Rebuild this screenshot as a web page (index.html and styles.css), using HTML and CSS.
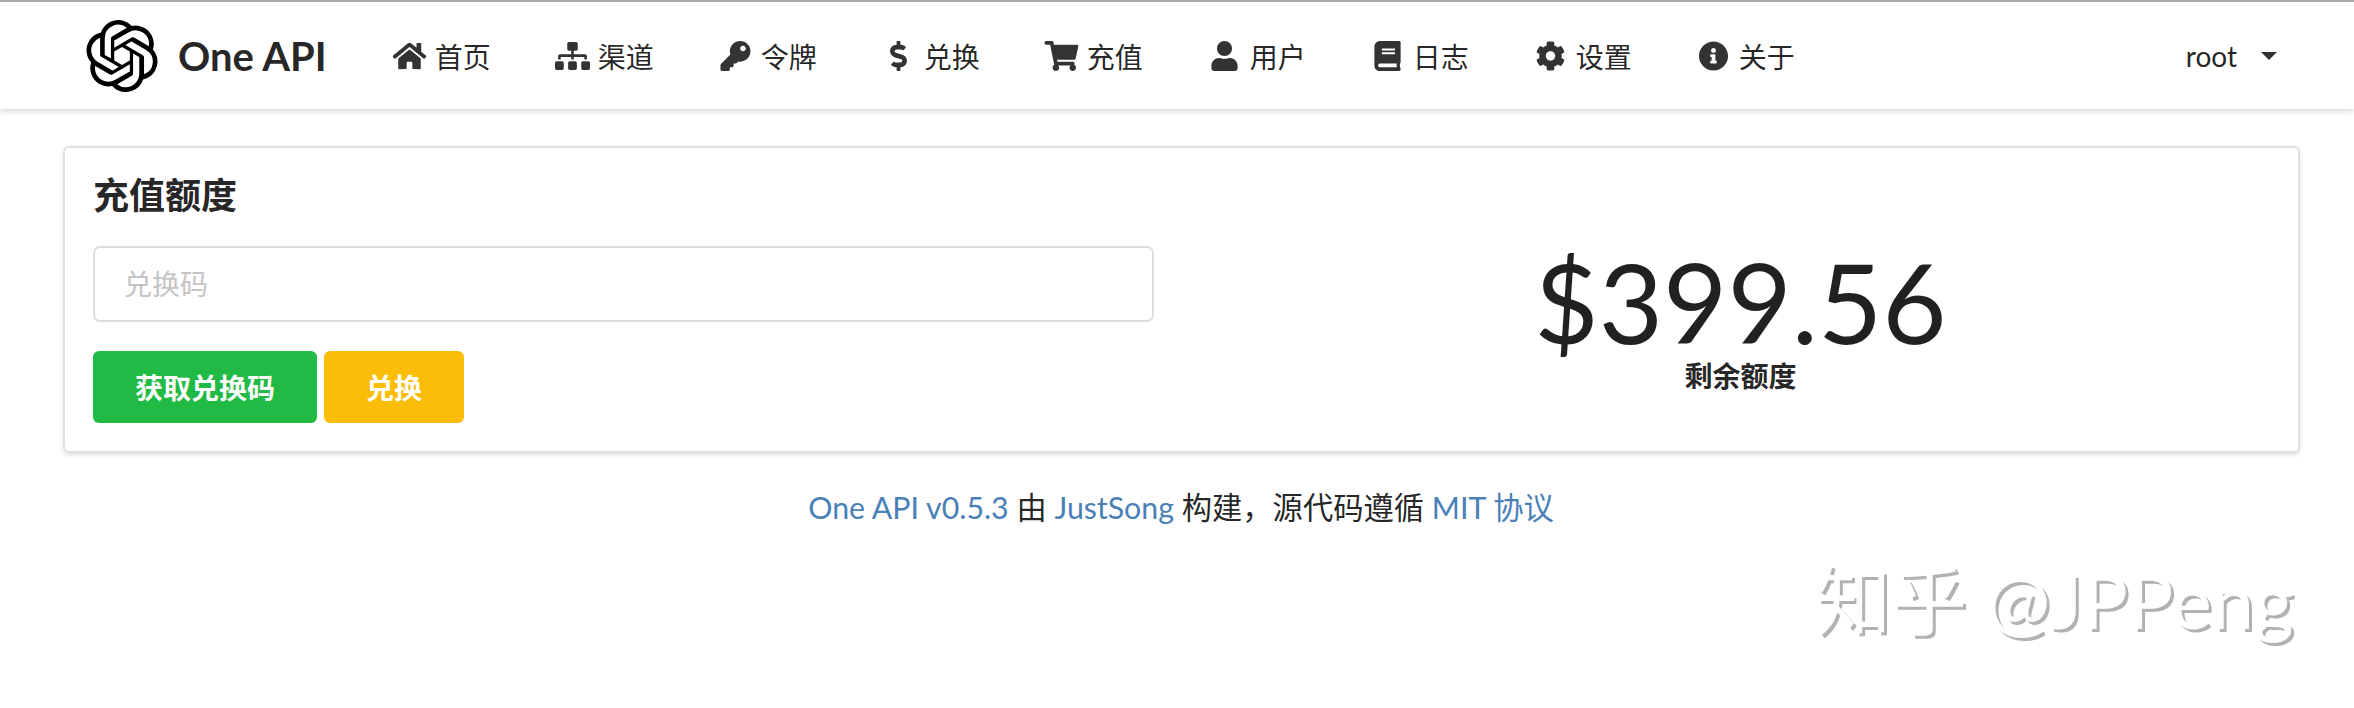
FILE: index.html
```html
<!DOCTYPE html>
<html lang="en">
<head>
    <meta charset="UTF-8">
    <meta name="viewport" content="width=device-width, initial-scale=1.0">
    <title>One API</title>
    <link rel="stylesheet" href="styles.css">
</head>
<body>
    <!-- Header -->
    <div class="header">
        <a class="brand" href="#">
            <svg class="logo" viewBox="0 0 24 24"><path d="M22.2819 9.8211a5.9847 5.9847 0 0 0-.5157-4.9108 6.0462 6.0462 0 0 0-6.5098-2.9A6.0651 6.0651 0 0 0 4.9807 4.1818a5.9847 5.9847 0 0 0-3.9977 2.9 6.0462 6.0462 0 0 0 .7427 7.0966 5.98 5.98 0 0 0 .511 4.9107 6.051 6.051 0 0 0 6.5146 2.9001A5.9847 5.9847 0 0 0 13.2599 24a6.0557 6.0557 0 0 0 5.7718-4.2058 5.9894 5.9894 0 0 0 3.9977-2.9001 6.0557 6.0557 0 0 0-.7475-7.0729zm-9.022 12.6081a4.4755 4.4755 0 0 1-2.8764-1.0408l.1419-.0804 4.7783-2.7582a.7948.7948 0 0 0 .3927-.6813v-6.7369l2.02 1.1686a.071.071 0 0 1 .038.052v5.5826a4.504 4.504 0 0 1-4.4945 4.4944zm-9.6607-4.1254a4.4708 4.4708 0 0 1-.5346-3.0137l.142.0852 4.783 2.7582a.7712.7712 0 0 0 .7806 0l5.8428-3.3685v2.3324a.0804.0804 0 0 1-.0332.0615L9.74 19.9502a4.4992 4.4992 0 0 1-6.1408-1.6464zM2.3408 7.8956a4.485 4.485 0 0 1 2.3655-1.9728V11.6a.7664.7664 0 0 0 .3879.6765l5.8144 3.3543-2.0201 1.1685a.0757.0757 0 0 1-.071 0l-4.8303-2.7865A4.504 4.504 0 0 1 2.3408 7.872zm16.5963 3.8558L13.1038 8.364 15.1192 7.2a.0757.0757 0 0 1 .071 0l4.8303 2.7913a4.4944 4.4944 0 0 1-.6765 8.1042v-5.6772a.79.79 0 0 0-.407-.667zm2.0107-3.0231l-.142-.0852-4.7735-2.7818a.7759.7759 0 0 0-.7854 0L9.409 9.2297V6.8974a.0662.0662 0 0 1 .0284-.0615l4.8303-2.7866a4.4992 4.4992 0 0 1 6.6802 4.66zM8.3065 12.863l-2.02-1.1638a.0804.0804 0 0 1-.038-.0567V6.0742a4.4992 4.4992 0 0 1 7.3757-3.4537l-.142.0805L8.704 5.459a.7948.7948 0 0 0-.3927.6813zm1.0976-2.3654l2.602-1.4998 2.6069 1.4998v2.9994l-2.5974 1.4997-2.6067-1.4997Z"/></svg>
            <span>One API</span>
        </a>
        <nav class="menu">
            <a href="#"><svg class="icon" viewBox="0 0 576 512"><path d="M280.37 148.26L96 300.11V464a16 16 0 0 0 16 16l112.06-.29a16 16 0 0 0 15.92-16V368a16 16 0 0 1 16-16h64a16 16 0 0 1 16 16v95.64a16 16 0 0 0 16 16.05L464 480a16 16 0 0 0 16-16V300L295.67 148.26a12.19 12.19 0 0 0-15.3 0zM571.6 251.47L488 182.56V44.05a12 12 0 0 0-12-12h-56a12 12 0 0 0-12 12v72.61L318.47 43a48 48 0 0 0-61 0L4.34 251.47a12 12 0 0 0-1.6 16.9l25.5 31A12 12 0 0 0 45.15 301l235.22-193.74a12.19 12.19 0 0 1 15.3 0L530.9 301a12 12 0 0 0 16.9-1.6l25.5-31a12 12 0 0 0-1.7-16.93z"/></svg>首页</a>
            <a href="#"><svg class="icon" viewBox="0 0 640 512"><path d="M128 352H32c-17.67 0-32 14.33-32 32v96c0 17.67 14.33 32 32 32h96c17.67 0 32-14.33 32-32v-96c0-17.67-14.33-32-32-32zm-24-80h192v48h48v-48h192v48h48v-57.59c0-21.17-17.23-38.41-38.41-38.41H344v-64h40c17.67 0 32-14.33 32-32V32c0-17.67-14.33-32-32-32H256c-17.67 0-32 14.33-32 32v96c0 17.67 14.33 32 32 32h40v64H94.41C73.23 224 56 241.23 56 262.41V320h48v-48zm264 80h-96c-17.67 0-32 14.33-32 32v96c0 17.67 14.33 32 32 32h96c17.67 0 32-14.33 32-32v-96c0-17.67-14.33-32-32-32zm240 0h-96c-17.67 0-32 14.33-32 32v96c0 17.67 14.33 32 32 32h96c17.67 0 32-14.33 32-32v-96c0-17.67-14.33-32-32-32z"/></svg>渠道</a>
            <a href="#"><svg class="icon" viewBox="0 0 512 512"><path d="M512 176.001C512 273.203 433.202 352 336 352c-11.22 0-22.19-1.062-32.827-3.069l-24.012 27.014A23.999 23.999 0 0 1 261.223 384H224v40c0 13.255-10.745 24-24 24h-40v40c0 13.255-10.745 24-24 24H24c-13.255 0-24-10.745-24-24v-78.059c0-6.365 2.529-12.47 7.029-16.971l161.802-161.802C163.108 213.814 160 195.271 160 176 160 78.798 238.797.001 335.999 0 433.488-.001 512 78.511 512 176.001zM336 128c0 26.51 21.49 48 48 48s48-21.49 48-48-21.49-48-48-48-48 21.49-48 48z"/></svg>令牌</a>
            <a href="#"><svg class="icon" viewBox="0 0 288 512"><path d="M209.2 233.4l-108-31.6C88.7 198.2 80 186.5 80 173.5c0-16.3 13.2-29.5 29.5-29.5h66.3c12.2 0 24.2 3.7 34.2 10.5 6.1 4.1 14.3 3.1 19.5-2l34.8-34c7.1-6.9 6.1-18.4-1.8-24.5C238 74.8 207.4 64.1 176 64V16c0-8.8-7.2-16-16-16h-32c-8.8 0-16 7.2-16 16v48h-2.5C45.8 64-5.4 118.7.5 183.6c4.2 46.1 39.4 83.6 83.8 96.6l102.5 30c12.5 3.7 21.2 15.3 21.2 28.3 0 16.3-13.2 29.5-29.5 29.5h-66.3C100 368 88 364.3 78 357.5c-6.1-4.1-14.3-3.1-19.5 2l-34.8 34c-7.1 6.9-6.1 18.4 1.8 24.5 24.5 19.2 55.1 29.9 86.5 30v48c0 8.8 7.2 16 16 16h32c8.8 0 16-7.2 16-16v-48.2c46.6-.9 90.3-28.6 105.7-72.7 21.5-61.6-14.6-124.8-72.5-141.7z"/></svg>兑换</a>
            <a href="#"><svg class="icon" viewBox="0 0 576 512"><path d="M528.12 301.319l47.273-208C578.806 78.301 567.391 64 551.99 64H159.208l-9.166-44.81C147.758 8.021 137.93 0 126.529 0H24C10.745 0 0 10.745 0 24v16c0 13.255 10.745 24 24 24h69.883l70.248 343.435C147.325 417.1 136 435.222 136 456c0 30.928 25.072 56 56 56s56-25.072 56-56c0-15.674-6.447-29.835-16.824-40h209.647C430.447 426.165 424 440.326 424 456c0 30.928 25.072 56 56 56s56-25.072 56-56c0-22.172-12.888-41.332-31.579-50.405l5.517-24.276c3.413-15.018-8.002-29.319-23.403-29.319H218.117l-6.545-32h293.145c11.206 0 20.92-7.754 23.403-18.681z"/></svg>充值</a>
            <a href="#"><svg class="icon" viewBox="0 0 448 512"><path d="M224 256c70.7 0 128-57.3 128-128S294.7 0 224 0 96 57.3 96 128s57.3 128 128 128zm89.6 32h-16.7c-22.2 10.2-46.9 16-72.9 16s-50.6-5.8-72.9-16h-16.7C60.2 288 0 348.2 0 422.4V464c0 26.5 21.5 48 48 48h352c26.5 0 48-21.5 48-48v-41.6c0-74.2-60.2-134.4-134.4-134.4z"/></svg>用户</a>
            <a href="#"><svg class="icon" viewBox="0 0 448 512"><path d="M448 360V24c0-13.3-10.7-24-24-24H96C43 0 0 43 0 96v320c0 53 43 96 96 96h328c13.3 0 24-10.7 24-24v-16c0-7.5-3.5-14.3-8.9-18.7-4.2-15.4-4.2-59.3 0-74.7 5.4-4.3 8.9-11.1 8.9-18.6zM128 134c0-3.3 2.7-6 6-6h212c3.3 0 6 2.7 6 6v20c0 3.3-2.7 6-6 6H134c-3.3 0-6-2.7-6-6v-20zm0 64c0-3.3 2.7-6 6-6h212c3.3 0 6 2.7 6 6v20c0 3.3-2.7 6-6 6H134c-3.3 0-6-2.7-6-6v-20zm253.4 250H96c-17.7 0-32-14.3-32-32 0-17.6 14.4-32 32-32h285.4c-1.9 17.1-1.9 46.9 0 64z"/></svg>日志</a>
            <a href="#"><svg class="icon" viewBox="0 0 512 512"><path d="M487.4 315.7l-42.6-24.6c4.3-23.2 4.3-47 0-70.2l42.6-24.6c4.9-2.8 7.1-8.6 5.5-14-11.1-35.6-30-67.8-54.7-94.6-3.8-4.1-10-5.1-14.8-2.3L380.8 110c-17.9-15.4-38.5-27.3-60.8-35.1V25.8c0-5.6-3.9-10.5-9.4-11.7-36.7-8.2-74.3-7.8-109.2 0-5.5 1.2-9.4 6.1-9.4 11.7V75c-22.2 7.9-42.8 19.8-60.8 35.1L88.7 85.5c-4.9-2.8-11-1.9-14.8 2.3-24.7 26.7-43.6 58.9-54.7 94.6-1.7 5.4.6 11.2 5.5 14L67.3 221c-4.3 23.2-4.3 47 0 70.2l-42.6 24.6c-4.9 2.8-7.1 8.6-5.5 14 11.1 35.6 30 67.8 54.7 94.6 3.8 4.1 10 5.1 14.8 2.3l42.6-24.6c17.9 15.4 38.5 27.3 60.8 35.1v49.2c0 5.6 3.9 10.5 9.4 11.7 36.7 8.2 74.3 7.8 109.2 0 5.5-1.2 9.4-6.1 9.4-11.7v-49.2c22.2-7.9 42.8-19.8 60.8-35.1l42.6 24.6c4.9 2.8 11 1.9 14.8-2.3 24.7-26.7 43.6-58.9 54.7-94.6 1.5-5.5-.7-11.3-5.6-14.1zM256 336c-44.1 0-80-35.9-80-80s35.9-80 80-80 80 35.9 80 80-35.9 80-80 80z"/></svg>设置</a>
            <a href="#"><svg class="icon" viewBox="0 0 512 512"><path d="M256 8C119.043 8 8 119.083 8 256c0 136.997 111.043 248 248 248s248-111.003 248-248C504 119.083 392.957 8 256 8zm0 110c23.196 0 42 18.804 42 42s-18.804 42-42 42-42-18.804-42-42 18.804-42 42-42zm56 254c0 6.627-5.373 12-12 12h-88c-6.627 0-12-5.373-12-12v-24c0-6.627 5.373-12 12-12h12v-64h-12c-6.627 0-12-5.373-12-12v-24c0-6.627 5.373-12 12-12h64c6.627 0 12 5.373 12 12v100h12c6.627 0 12 5.373 12 12v24z"/></svg>关于</a>
        </nav>
        <div class="user-menu">
            <span>root</span>
            <i class="caret"></i>
        </div>
    </div>

    <!-- Main Content -->
    <div class="card">
        <h2>充值额度</h2>
        <div class="card-grid">
            <div class="redeem">
                <input class="code-input" type="text" placeholder="兑换码">
                <div class="button-row">
                    <button class="btn btn-green">获取兑换码</button>
                    <button class="btn btn-yellow">兑换</button>
                </div>
            </div>
            <div class="balance">
                <div class="balance-value">$399.56</div>
                <div class="balance-label">剩余额度</div>
            </div>
        </div>
    </div>

    <div class="footer">
        <a href="#">One API v0.5.3</a> 由 <a href="#">JustSong</a> 构建，源代码遵循 <a href="#">MIT 协议</a>
    </div>

    <!-- Image watermark -->
    <div class="watermark" data-text="知乎 @JPPeng">知乎 @JPPeng</div>
</body>
</html>
```

FILE: styles.css
```css
body {
    font-family: Lato, "Noto Sans CJK SC", sans-serif;
    margin: 0;
    padding: 0;
    background: #fff;
    color: rgba(0, 0, 0, 0.87);
    font-size: 28px;
}

a {
    text-decoration: none;
}

.header {
    display: flex;
    align-items: center;
    height: 107px;
    border-top: 2px solid #aaa;
    padding-left: 86px;
    padding-right: 77px;
    box-shadow: 0 2px 6px rgba(34, 36, 38, 0.2);
}

.brand {
    display: flex;
    align-items: center;
    gap: 20px;
    color: rgba(0, 0, 0, 0.87);
    font-size: 40px;
    font-weight: bold;
}

.logo {
    width: 72px;
    height: 72px;
}

.menu {
    display: flex;
    align-items: center;
    gap: 64px;
    margin-left: 65px;
    flex: 1;
}

.menu a {
    display: flex;
    align-items: center;
    color: rgba(0, 0, 0, 0.87);
}

.icon {
    width: 35px;
    height: 30px;
    margin-right: 8px;
    fill: rgba(0, 0, 0, 0.8);
}

.user-menu {
    display: flex;
    align-items: center;
    gap: 24px;
}

.caret {
    width: 0;
    height: 0;
    border-left: 8px solid transparent;
    border-right: 8px solid transparent;
    border-top: 8px solid rgba(0, 0, 0, 0.8);
}

.card {
    margin: 37px 54px 0 63px;
    padding: 24px 30px 28px 28px;
    border-radius: 6px;
    border: 2px solid #e0e0e0;
    box-shadow: 0 2px 4px rgba(34, 36, 38, 0.15);
}

.card h2 {
    margin: 0;
    font-size: 36px;
    line-height: 46px;
    font-weight: bold;
}

.card-grid {
    display: grid;
    grid-template-columns: 1fr 1fr;
    gap: 53px;
    margin-top: 28px;
}

.code-input {
    display: block;
    box-sizing: border-box;
    width: 100%;
    height: 76px;
    padding: 0 29px;
    font-family: inherit;
    font-size: 28px;
    border: 2px solid #ddd;
    border-radius: 7px;
}

.code-input::placeholder {
    color: #c4c4c4;
}

.button-row {
    display: flex;
    gap: 7px;
    margin-top: 29px;
}

.btn {
    height: 72px;
    border: none;
    border-radius: 6px;
    color: white;
    font-family: inherit;
    font-size: 28px;
    font-weight: bold;
}

.btn-green {
    width: 224px;
    background-color: #21ba45;
}

.btn-yellow {
    width: 140px;
    background-color: #fbbd08;
}

.balance {
    text-align: center;
    padding-left: 6px;
}

.balance-value {
    font-size: 111px;
    line-height: 110px;
}

.balance-label {
    margin-top: 2px;
    font-size: 28px;
    font-weight: bold;
    line-height: 36px;
}

.footer {
    margin-top: 32px;
    text-align: center;
    font-size: 30.3px;
    line-height: 44px;
    padding-left: 8px;
}

.footer a {
    color: #4a80b8;
}

/* white copy on top leaves only the lower edge of the letters */
.watermark {
    position: absolute;
    left: 1818px;
    top: 553px;
    font-size: 76px;
    line-height: 100px;
    color: #b2b2b2;
    white-space: nowrap;
}

.watermark::after {
    content: attr(data-text);
    position: absolute;
    left: -3px;
    top: -3px;
    color: #fff;
}
```
